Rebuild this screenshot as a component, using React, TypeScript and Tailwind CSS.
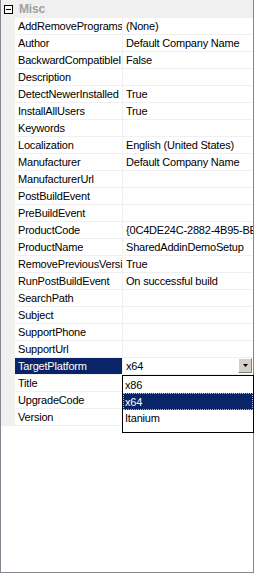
import React from "react";

const rows: [string, string][] = [
  ["AddRemovePrograms", "(None)"],
  ["Author", "Default Company Name"],
  ["BackwardCompatibleI", "False"],
  ["Description", ""],
  ["DetectNewerInstalled", "True"],
  ["InstallAllUsers", "True"],
  ["Keywords", ""],
  ["Localization", "English (United States)"],
  ["Manufacturer", "Default Company Name"],
  ["ManufacturerUrl", ""],
  ["PostBuildEvent", ""],
  ["PreBuildEvent", ""],
  ["ProductCode", "{0C4DE24C-2882-4B95-BE"],
  ["ProductName", "SharedAddinDemoSetup"],
  ["RemovePreviousVersi", "True"],
  ["RunPostBuildEvent", "On successful build"],
  ["SearchPath", ""],
  ["Subject", ""],
  ["SupportPhone", ""],
  ["SupportUrl", ""],
  ["TargetPlatform", "x64"],
  ["Title", ""],
  ["UpgradeCode", ""],
  ["Version", ""],
];

export default function App() {
  return (
    <div
      className="relative w-[254px] h-[573px] bg-white border-x border-b border-[#828790] flex flex-col text-[11px] tracking-[-0.2px] text-black"
      style={{ fontFamily: '"Liberation Sans", Arial, sans-serif' }}
    >
      <div className="h-[18px] bg-[#f0f0f0] flex items-center shrink-0">
        <div className="w-[14px] h-full flex items-center justify-center">
          <div className="w-[9px] h-[9px] border border-black flex items-center justify-center bg-white">
            <div className="w-[5px] h-px bg-black" />
          </div>
        </div>
        <span className="ml-[4px] font-bold text-[12px] text-[#a0a0a0]">Misc</span>
      </div>
      {rows.map(([name, value]) => {
        const sel = name === "TargetPlatform";
        return (
          <div key={name} className="h-[17px] flex shrink-0">
            <div className="w-[14px] bg-[#f0f0f0] shrink-0" />
            <div
              className={
                "w-[108px] shrink-0 overflow-hidden whitespace-nowrap pl-[3px] leading-[16px] border-b border-r border-[#f0f0f0] " +
                (sel ? "bg-[#0a246a] text-white" : "")
              }
            >
              {name}
            </div>
            <div className="flex-1 min-w-0 overflow-hidden whitespace-nowrap pl-[3px] leading-[16px] border-b border-[#f0f0f0] flex">
              <span className="flex-1 overflow-hidden">{value}</span>
              {sel && (
                <div className="w-[14px] h-[15px] mr-[1px] bg-[#d4d0c8] border-r border-b border-[#808080] border-t border-l border-t-white border-l-white flex items-center justify-center">
                  <svg width="5" height="3" viewBox="0 0 5 3">
                    <polygon points="0,0 5,0 2.5,3" fill="black" />
                  </svg>
                </div>
              )}
            </div>
          </div>
        );
      })}
      <div className="absolute left-[121px] top-[375px] w-[132px] h-[58px] bg-white border border-black text-[11px] leading-[16px]">
        <div className="h-[16px] pl-[2px] mt-[1px]">x86</div>
        <div className="h-[17px] pl-[1px] bg-[#0a246a] text-white border border-dotted border-[#c0c0c0]">x64</div>
        <div className="h-[16px] pl-[2px]">Itanium</div>
      </div>
    </div>
  );
}
